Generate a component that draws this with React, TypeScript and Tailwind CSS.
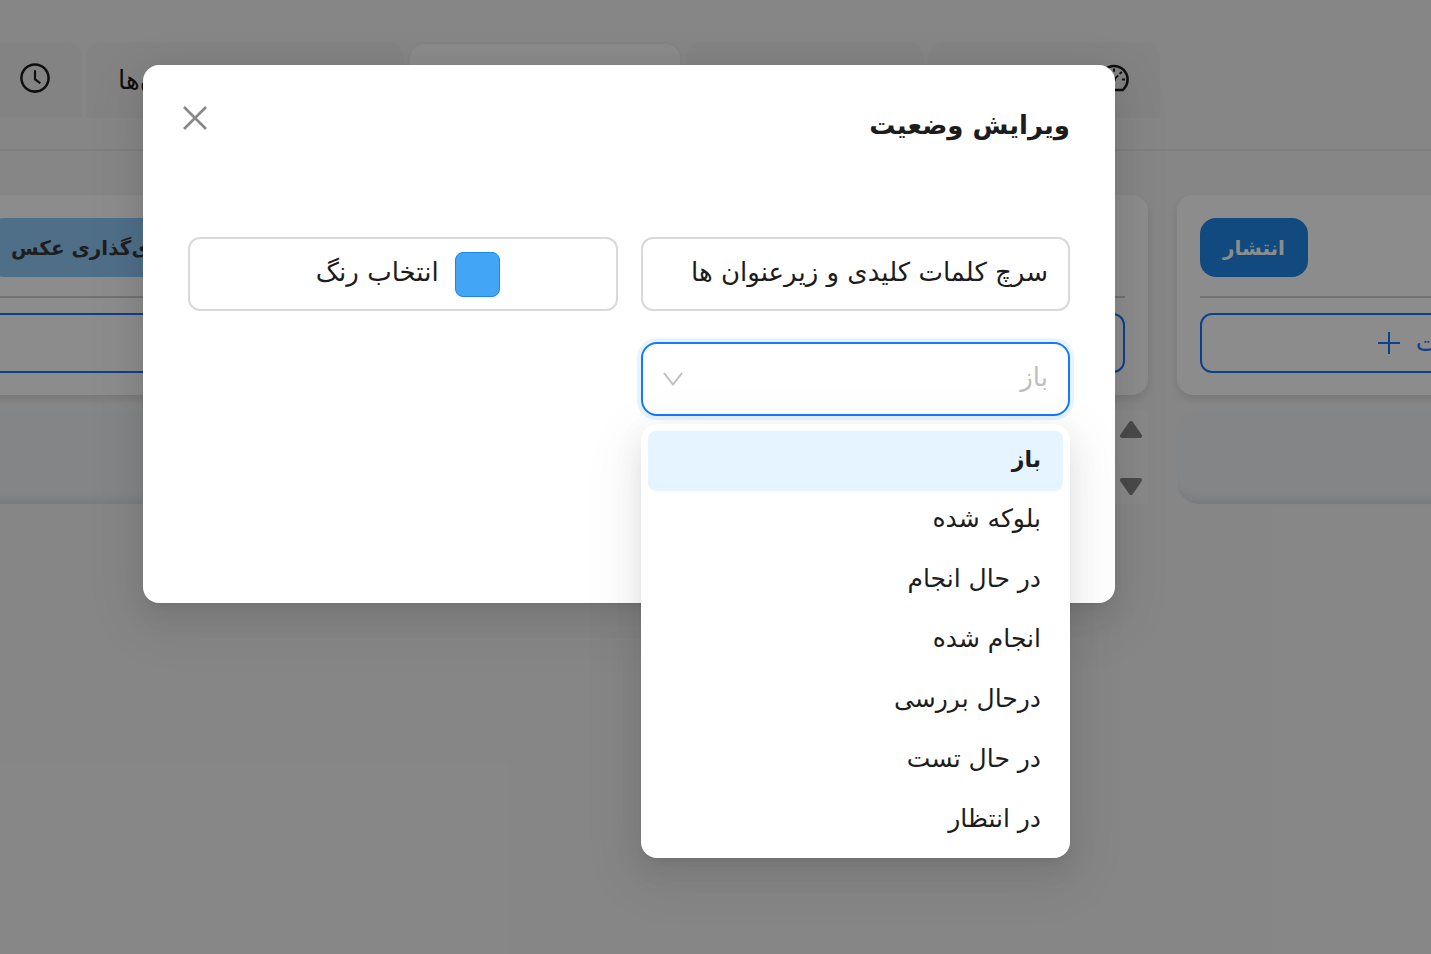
import { useState } from 'react';
import { AiOutlineClockCircle, AiOutlineDashboard } from 'react-icons/ai';

const STATUSES = [
    'باز',
    'بلوکه شده',
    'در حال انجام',
    'انجام شده',
    'درحال بررسی',
    'در حال تست',
    'در انتظار',
];

function PlusIcon() {
    return (
        <svg viewBox="0 0 22 22" className="size-[22px]" fill="none" stroke="currentColor" strokeWidth="2">
            <path d="M11 0v22M0 11h22" />
        </svg>
    );
}

function Triangle({ down }: { down?: boolean }) {
    return (
        <svg viewBox="0 0 22 17" className="h-[17px] w-[22px]" fill="#888888" stroke="#888888" strokeWidth="4" strokeLinejoin="round">
            {down ? <path d="M2 2h18l-9 13z" /> : <path d="M11 2l9 13H2z" />}
        </svg>
    );
}

function Column({ label, color, scroller }: { label?: string; color?: string; scroller?: boolean }) {
    return (
        <section className="w-[577px] shrink-0">
            <div className="rounded-2xl bg-white px-[23px] pt-[23px] pb-[22px] shadow-[0_4px_10px_rgba(0,0,0,0.12)]">
                <div className="flex h-[59px]">
                    {label && (
                        <h3 dir="rtl" className={`flex h-full items-center rounded-2xl px-[23px] text-[20px] font-bold ${color}`}>
                            {label}
                        </h3>
                    )}
                </div>
                <hr className="mt-[19px] mb-[15px] border-t-2 border-[#d0d0d0]" />
                <button className="flex h-[60px] w-full items-center justify-center gap-4 rounded-xl border-2 border-[#1677ff] text-[25px] text-[#1677ff]">
                    <PlusIcon />
                    <span dir="rtl">افزودن کارت</span>
                </button>
            </div>
            {scroller ? (
                <div className="mt-[15px] flex h-[94px] flex-col items-end justify-between bg-[#f8f8f8] px-[6px] pt-[11px] pb-[9px]">
                    <Triangle />
                    <Triangle down />
                </div>
            ) : (
                <div className="mt-[15px] h-[94px] rounded-[22px] bg-[#eff2f5] shadow-[inset_0_-12px_12px_-10px_rgba(0,0,0,0.12)]" />
            )}
        </section>
    );
}

export default function App() {
    const [title, setTitle] = useState('سرچ کلمات کلیدی و زیرعنوان ها');
    const [status, setStatus] = useState('باز');

    return (
        <div className="relative min-h-screen overflow-hidden bg-[#f5f5f5] font-['DejaVu_Sans',sans-serif] text-[#1c1c1c]">
            <header className="border-b-2 border-[#e4e9e9] pt-[42px] pb-[31px]">
                <nav className="flex h-[76px] gap-1">
                    <button aria-label="زمان" className="flex w-[82px] shrink-0 items-center justify-end rounded-tr-2xl bg-[#eeeeee] pr-[30px] pb-1">
                        <AiOutlineClockCircle size={34} />
                    </button>
                    <button className="flex w-[318px] shrink-0 items-center rounded-t-2xl bg-[#eeeeee] px-8 text-[26px]">
                        <span dir="rtl">زیرعنوان‌ها</span>
                    </button>
                    <button aria-label="برد" className="w-[274px] shrink-0 rounded-t-2xl border-2 border-b-0 border-[#eeeeee] bg-[#fcfcfc]" />
                    <button aria-label="فهرست" className="w-[238px] shrink-0 rounded-t-2xl bg-[#eeeeee]" />
                    <button aria-label="داشبورد" className="flex w-[232px] shrink-0 items-center justify-end rounded-t-2xl bg-[#eeeeee] pr-[29px] pb-1">
                        <AiOutlineDashboard size={34} />
                    </button>
                </nav>
            </header>

            <main className="-ml-[35px] flex gap-[29px] pt-11">
                <Column label="جای‌گذاری عکس" color="bg-[#90caf9] text-[#383838]" />
                <Column scroller />
                <Column label="انتشار" color="bg-[#1e88e5] text-white" />
            </main>

            <div className="absolute inset-0 bg-black/45 pt-[65px] pr-[316px] pl-[143px]">
                <div
                    role="dialog"
                    aria-labelledby="dialog-title"
                    dir="rtl"
                    className="rounded-2xl bg-white px-[45px] pb-[187px] shadow-[0_11px_30px_0_rgba(0,0,0,0.08),0_6px_11px_-7px_rgba(0,0,0,0.12),0_17px_52px_15px_rgba(0,0,0,0.05)]"
                >
                    <div className="-ml-1.5 flex items-start justify-between pt-10">
                        <h2 id="dialog-title" className="h-[132px] text-[26px] leading-10 font-bold">ویرایش وضعیت</h2>
                        <button aria-label="بستن" className="text-[#888888]">
                            <svg viewBox="0 0 26 26" className="size-[26px]" fill="none" stroke="currentColor" strokeWidth="2.6">
                                <path d="M2 2l22 22M24 2L2 24" />
                            </svg>
                        </button>
                    </div>

                    <form className="grid grid-cols-2 gap-x-[23px] gap-y-[31px]">
                        <input
                            aria-label="عنوان"
                            value={title}
                            onChange={e => setTitle(e.target.value)}
                            className="h-[74px] w-full rounded-xl border-2 border-[#d9d9d9] px-5 pb-1 text-[26px] outline-none"
                        />
                        <button type="button" className="flex h-[74px] items-center justify-center gap-4 rounded-xl border-2 border-[#d9d9d9] pl-2.5 text-[26px]">
                            <span className="size-[45px] rounded-lg border border-[#1e88e5] bg-[#42a5f5]" />
                            <span className="pb-1">انتخاب رنگ</span>
                        </button>
                        <div className="relative">
                            <select
                                aria-label="وضعیت"
                                value={status}
                                onChange={e => setStatus(e.target.value)}
                                className="h-[74px] w-full appearance-none rounded-2xl border-2 border-[#1677ff] bg-white px-5 pb-1 text-[26px] text-[#bfbfbf] shadow-[0_0_0_4px_#e6f4ff] outline-none"
                            >
                                {STATUSES.map(s => (
                                    <option key={s}>{s}</option>
                                ))}
                            </select>
                            <svg viewBox="0 0 20 14" className="pointer-events-none absolute top-[30px] left-[22px] h-[14px] w-5" fill="none" stroke="#bfbfbf" strokeWidth="2">
                                <path d="M1 1l9 11.500L19 1" />
                            </svg>
                            <ul
                                role="listbox"
                                className="absolute inset-x-0 top-full mt-2 rounded-2xl bg-white p-[7px] shadow-[0_11px_30px_0_rgba(0,0,0,0.08),0_6px_11px_-7px_rgba(0,0,0,0.12),0_17px_52px_15px_rgba(0,0,0,0.05)]"
                            >
                                {STATUSES.map(s => (
                                    <li
                                        key={s}
                                        role="option"
                                        aria-selected={s === status}
                                        onClick={() => setStatus(s)}
                                        className={`flex h-[60px] cursor-pointer items-center rounded-lg px-[22px] pb-1 ${s === status ? 'bg-[#e6f4ff] text-[22px] font-bold' : 'text-[25px]'}`}
                                    >
                                        {s}
                                    </li>
                                ))}
                            </ul>
                        </div>
                    </form>
                </div>
            </div>
        </div>
    );
}
